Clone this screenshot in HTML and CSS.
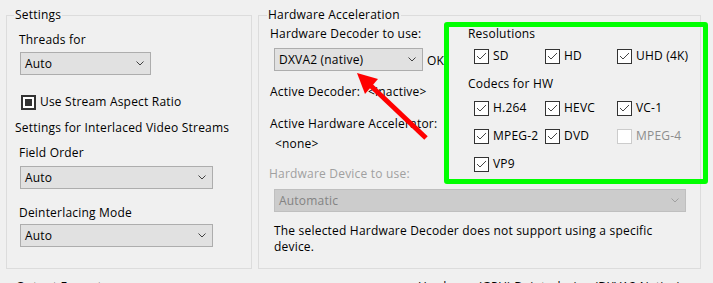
FILE: index.html
```html
<!DOCTYPE html>
<html lang="en">
<head>
    <meta charset="UTF-8">
    <meta name="viewport" content="width=device-width, initial-scale=1.0">
    <title>LAV Video Settings</title>
    <link rel="stylesheet" href="styles.css">
</head>
<body>
    <div class="page">
        <div class="row">
            <fieldset class="group group-settings">
                <legend>Settings</legend>
                <div class="label">Threads for</div>
                <div class="select select-threads">
                    <span>Auto</span>
                    <svg class="chev" width="8" height="5" viewBox="0 0 8 5"><polyline points="0.5,0.5 4,4 7.5,0.5"/></svg>
                </div>
                <div class="check-row aspect">
                    <span class="cb cb-mixed"><span class="mixed-fill"></span></span>
                    <span>Use Stream Aspect Ratio</span>
                </div>
                <div class="heading">Settings for Interlaced Video Streams</div>
                <div class="label field-label">Field Order</div>
                <div class="select select-wide field-select">
                    <span>Auto</span>
                    <svg class="chev" width="8" height="5" viewBox="0 0 8 5"><polyline points="0.5,0.5 4,4 7.5,0.5"/></svg>
                </div>
                <div class="label deint-label">Deinterlacing Mode</div>
                <div class="select select-wide deint-select">
                    <span>Auto</span>
                    <svg class="chev" width="8" height="5" viewBox="0 0 8 5"><polyline points="0.5,0.5 4,4 7.5,0.5"/></svg>
                </div>
            </fieldset>

            <fieldset class="group group-hw">
                <legend>Hardware Acceleration</legend>
                <div class="hw-top">
                    <div class="hw-col">
                        <div class="hw-label">Hardware Decoder to use:</div>
                        <div class="decoder-row">
                            <div class="select select-decoder">
                                <span>DXVA2 (native)</span>
                                <svg class="chev" width="8" height="5" viewBox="0 0 8 5"><polyline points="0.5,0.5 4,4 7.5,0.5"/></svg>
                            </div>
                            <span class="ok">OK</span>
                        </div>
                        <div class="hw-label active-decoder"><span class="info-key">Active Decoder:</span><span>&lt;inactive&gt;</span></div>
                        <div class="hw-label active-accel">Active Hardware Accelerator:</div>
                        <div class="none-val">&lt;none&gt;</div>
                        <div class="device-label">Hardware Device to use:</div>
                    </div>

                    <div class="codec-panel">
                        <div class="panel-title">Resolutions</div>
                        <div class="check-grid res-grid">
                            <div class="check-row"><span class="cb"><svg width="13" height="13" viewBox="0 0 13 13"><polyline points="2,6 5,9 11,3"/></svg></span><span>SD</span></div>
                            <div class="check-row"><span class="cb"><svg width="13" height="13" viewBox="0 0 13 13"><polyline points="2,6 5,9 11,3"/></svg></span><span>HD</span></div>
                            <div class="check-row"><span class="cb"><svg width="13" height="13" viewBox="0 0 13 13"><polyline points="2,6 5,9 11,3"/></svg></span><span>UHD (4K)</span></div>
                        </div>
                        <div class="panel-title codecs-title">Codecs for HW</div>
                        <div class="check-grid codec-grid">
                            <div class="check-row"><span class="cb"><svg width="13" height="13" viewBox="0 0 13 13"><polyline points="2,6 5,9 11,3"/></svg></span><span>H.264</span></div>
                            <div class="check-row"><span class="cb"><svg width="13" height="13" viewBox="0 0 13 13"><polyline points="2,6 5,9 11,3"/></svg></span><span>HEVC</span></div>
                            <div class="check-row"><span class="cb"><svg width="13" height="13" viewBox="0 0 13 13"><polyline points="2,6 5,9 11,3"/></svg></span><span>VC-1</span></div>
                            <div class="check-row"><span class="cb"><svg width="13" height="13" viewBox="0 0 13 13"><polyline points="2,6 5,9 11,3"/></svg></span><span>MPEG-2</span></div>
                            <div class="check-row"><span class="cb"><svg width="13" height="13" viewBox="0 0 13 13"><polyline points="2,6 5,9 11,3"/></svg></span><span>DVD</span></div>
                            <div class="check-row disabled"><span class="cb cb-disabled"></span><span>MPEG-4</span></div>
                            <div class="check-row"><span class="cb"><svg width="13" height="13" viewBox="0 0 13 13"><polyline points="2,6 5,9 11,3"/></svg></span><span>VP9</span></div>
                        </div>
                    </div>
                </div>
                <div class="select select-disabled">
                    <span>Automatic</span>
                    <svg class="chev" width="8" height="5" viewBox="0 0 8 5"><polyline points="0.5,0.5 4,4 7.5,0.5"/></svg>
                </div>
                <div class="desc">The selected Hardware Decoder does not support using a specific device.</div>
            </fieldset>
        </div>

        <div class="row row-bottom">
            <fieldset class="group group-output">
                <legend>Output Formats</legend>
            </fieldset>
            <fieldset class="group group-deint">
                <legend>Hardware (GPU) Deinterlacing (DXVA2 Native)</legend>
            </fieldset>
        </div>

        <!-- red annotation arrow -->
        <svg class="arrow" width="713" height="283" viewBox="0 0 713 283">
            <line x1="426" y1="138" x2="370" y2="85"/>
            <polygon points="357,73 365,94 378,79"/>
        </svg>
    </div>
</body>
</html>
```

FILE: styles.css
```css
*{
    margin: 0;
    padding: 0;
    box-sizing: border-box;
}
html,body{
    width: 100%;
    height: 100%;
}
body{
    overflow: hidden;
    background-color: #f0f0f0;
    color: #000;
    font-family: "Open Sans", "Noto Sans", sans-serif;
    font-size: 12px;
    line-height: 16px;
    letter-spacing: 0.2px;
}
.page{
    position: relative;
    padding-top: 7px;
}
.row{
    display: flex;
    gap: 6px;
    padding-left: 6px;
}
.group{
    min-width: 0;
    border: 1px solid #dcdcdc;
}
.group legend{
    margin-left: -1px;
    padding: 0 1px;
    line-height: 16px;
}

/* left box */
.group-settings{
    width: 246px;
    padding: 9px 0 21px 8px;
}
.label{
    padding-left: 4px;
}
.select{
    display: flex;
    align-items: center;
    justify-content: space-between;
    height: 23px;
    padding: 0 6px 0 4px;
    background-color: #e1e1e1;
    border: 1px solid #adadad;
    white-space: nowrap;
}
.chev{
    flex: none;
    fill: none;
    stroke: #404040;
    stroke-width: 1;
}
.select-threads{
    width: 131px;
    margin: 4px 0 0 5px;
}
.select-wide{
    width: 193px;
    margin-left: 5px;
}
.check-row{
    display: flex;
    align-items: center;
    height: 16px;
    white-space: nowrap;
}
.aspect{
    margin: 19px 0 0 6px;
}
.cb{
    display: flex;
    align-items: center;
    justify-content: center;
    flex: none;
    width: 15px;
    height: 15px;
    margin-right: 4px;
    background-color: #fff;
    border: 1px solid #333;
}
.cb svg{
    fill: none;
    stroke: #444;
    stroke-width: 1;
}
.cb-mixed{
    padding: 2px;
    border-width: 2px;
}
.mixed-fill{
    width: 7px;
    height: 7px;
    background-color: #333;
}
.cb-disabled{
    border-color: #cccccc;
}
.heading{
    margin-top: 10px;
}
.field-label{
    margin-top: 9px;
}
.field-select{
    margin-top: 5px;
}
.deint-label{
    margin-top: 16px;
}
.deint-select{
    margin-top: 3px;
}

/* hardware box */
.group-hw{
    width: 443px;
    padding: 0 0 13px 9px;
}
.hw-top{
    display: flex;
    align-items: flex-start;
}
.hw-col{
    flex: none;
    width: 176px;
    padding-top: 3px;
    white-space: nowrap;
}
.hw-label{
    padding-left: 2px;
}
.decoder-row{
    display: flex;
    align-items: center;
    margin: 6px 0 0 6px;
}
.select-decoder{
    width: 149px;
}
.ok{
    margin-left: 4px;
    padding-top: 3px;
}
.active-decoder{
    margin-top: 13px;
}
.info-key{
    display: inline-block;
    width: 98px;
}
.active-accel{
    margin-top: 16px;
}
.none-val{
    margin-top: 4px;
    padding-left: 7px;
}
.device-label{
    margin-top: 14px;
    padding-left: 1px;
    color: #a0a0a0;
}
.codec-panel{
    flex: none;
    width: 264px;
    margin-top: -1px;
    padding: 0 0 7px 19px;
    border: 5px solid #00ff00;
    border-radius: 3px;
}
.panel-title{
    margin-top: -1px;
}
.codecs-title{
    margin-top: 12px;
}
.check-grid{
    display: grid;
    grid-template-columns: 71px 72px auto;
    row-gap: 12px;
    padding-left: 6px;
}
.res-grid{
    margin-top: 6px;
}
.codec-grid{
    margin-top: 8px;
}
.check-row.disabled{
    color: #8d8d8d;
}
.select-disabled{
    width: 412px;
    margin: 5px 0 0 6px;
    background-color: #cccccc;
    border-color: #bfbfbf;
    color: #838383;
}
.select-disabled .chev{
    stroke: #a0a0a0;
}
.desc{
    max-width: 406px;
    margin: 11px 0 0 6px;
}

/* next row, mostly cut off */
.row-bottom{
    justify-content: space-between;
    margin-top: 10px;
    padding-right: 12px;
}
.group-output{
    width: 246px;
    height: 40px;
    padding-left: 9px;
}
.group-deint{
    width: 293px;
    height: 40px;
    padding-left: 9px;
}

.arrow{
    position: absolute;
    top: 0;
    left: 0;
    pointer-events: none;
}
.arrow line{
    stroke: #ff0000;
    stroke-width: 5;
}
.arrow polygon{
    fill: #ff0000;
}
```
